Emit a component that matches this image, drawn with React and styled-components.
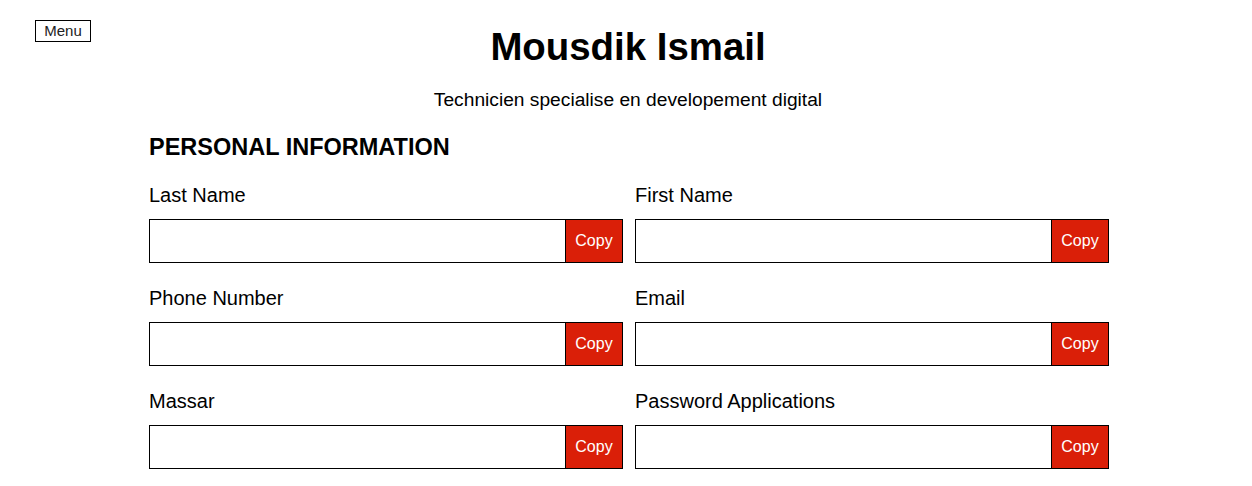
import React from "react";
import styled, { createGlobalStyle } from "styled-components";

const Global = createGlobalStyle`
  html, body { margin: 0; padding: 0; background: #fff; }
  body { font-family: "Liberation Sans", Arial, sans-serif; color: #000; }
`;

const Page = styled.div`
  position: relative;
  padding-top: 24px;
`;

const MenuButton = styled.button`
  position: absolute;
  left: 35px;
  top: 20px;
  width: 56px;
  height: 22px;
  padding: 0;
  border: 1px solid #000;
  background: #fff;
  font-family: "Liberation Sans", Arial, sans-serif;
  font-size: 15px;
  line-height: 20px;
  color: #222;
`;

const Header = styled.header`
  display: flex;
  flex-direction: column;
  align-items: center;
  padding-left: 4px;
`;

const Title = styled.h1`
  margin: 0;
  font-size: 38.4px;
  line-height: 46px;
  font-weight: 700;
`;

const Subtitle = styled.p`
  margin: 19px 0 0;
  font-size: 19.2px;
  line-height: 22px;
`;

const Section = styled.section`
  width: 960px;
  margin: 21px 0 0 149px;
`;

const SectionTitle = styled.h2`
  margin: 0;
  font-size: 23.5px;
  line-height: 30px;
  font-weight: 700;
`;

const Grid = styled.div`
  display: grid;
  grid-template-columns: 474px 474px;
  column-gap: 12px;
  row-gap: 23px;
  margin-top: 21px;
`;

const Field = styled.div`
  display: flex;
  flex-direction: column;
`;

const Label = styled.label`
  font-size: 20px;
  line-height: 24px;
  margin-bottom: 12px;
`;

const InputRow = styled.div`
  display: flex;
  height: 44px;
`;

const Input = styled.input`
  flex: 1;
  min-width: 0;
  box-sizing: border-box;
  height: 44px;
  border: 1px solid #000;
  border-right: none;
  margin: 0;
  padding: 0 8px;
  font-size: 16px;
  outline: none;
`;

const CopyButton = styled.button`
  width: 58px;
  height: 44px;
  box-sizing: border-box;
  border: 1px solid #000;
  background: #da1f08;
  color: #fff;
  font-family: "Liberation Sans", Arial, sans-serif;
  font-size: 16px;
  margin: 0;
  padding: 0;
`;

const fields = [
  "Last Name",
  "First Name",
  "Phone Number",
  "Email",
  "Massar",
  "Password Applications",
];

export default function App() {
  return (
    <Page>
      <Global />
      <MenuButton>Menu</MenuButton>
      <Header>
        <Title>Mousdik Ismail</Title>
        <Subtitle>Technicien specialise en developement digital</Subtitle>
      </Header>
      <Section>
        <SectionTitle>PERSONAL INFORMATION</SectionTitle>
        <Grid>
          {fields.map((f) => (
            <Field key={f}>
              <Label>{f}</Label>
              <InputRow>
                <Input type="text" />
                <CopyButton>Copy</CopyButton>
              </InputRow>
            </Field>
          ))}
        </Grid>
      </Section>
    </Page>
  );
}
